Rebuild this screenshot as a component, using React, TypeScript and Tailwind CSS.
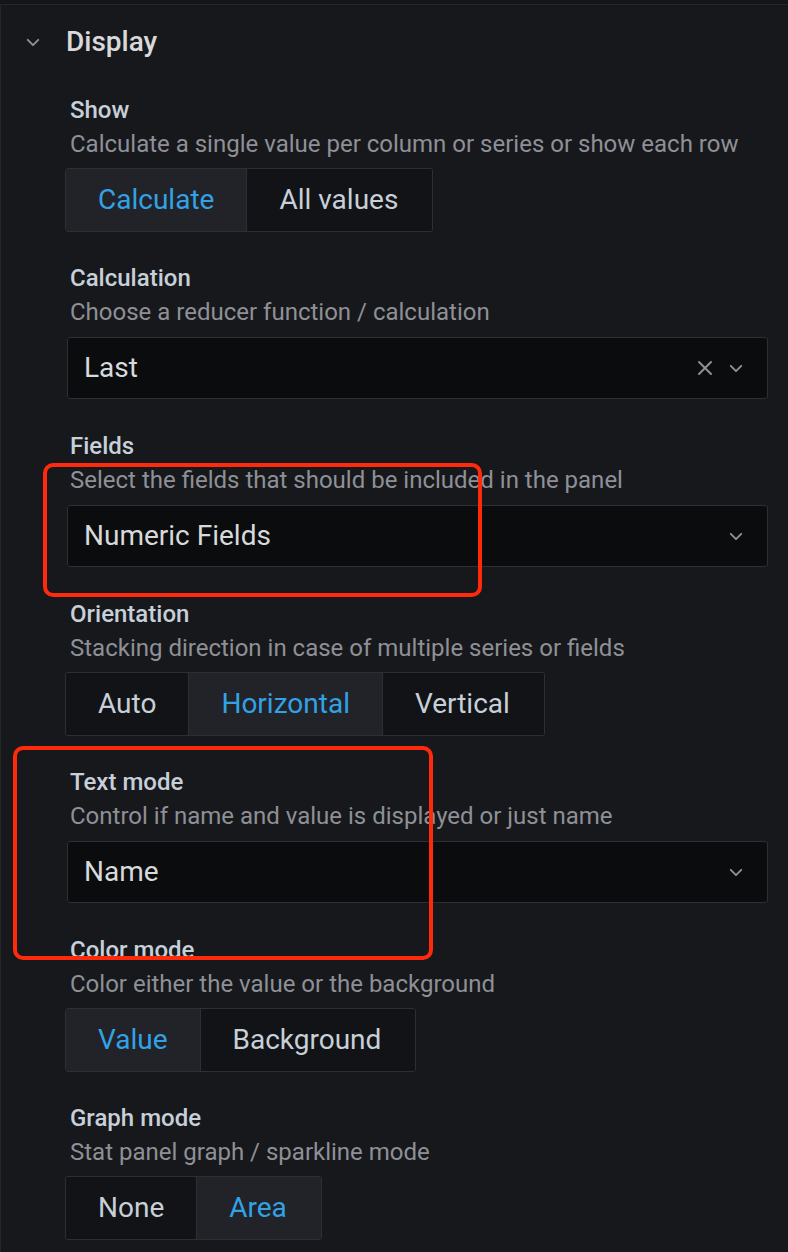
import React from "react";

type Opt = { label: string; active?: boolean };

function ChevronDown({ className }: { className?: string }) {
  return (
    <svg viewBox="0 0 16 10" className={className} fill="none" stroke="currentColor" strokeWidth="2.2" strokeLinecap="round" strokeLinejoin="round">
      <path d="M2 2 L8 8 L14 2" />
    </svg>
  );
}

function Field({ label, desc, children }: { label: string; desc: string; children: React.ReactNode }) {
  return (
    <div className="flex flex-col mb-[29px]">
      <div className="pl-[5px] h-[34px] leading-[34px] text-[24px] font-medium text-[#c7d0d9]">{label}</div>
      <div className="pl-[5px] h-[34px] leading-[34px] text-[24px] text-[#8e9096]">{desc}</div>
      {children}
    </div>
  );
}

function RadioGroup({ options }: { options: Opt[] }) {
  return (
    <div className="mt-[7px] flex self-start h-[64px] rounded-[3px] border border-[#2c2f34] overflow-hidden">
      {options.map((o, i) => (
        <div
          key={o.label}
          className={`flex items-center px-[32px] last:pr-[34px] text-[28px] ${i > 0 ? "border-l border-[#2c2f34]" : ""} ${
            o.active ? "bg-[#212328] text-[#33a2e5]" : "bg-[#121316] text-[#c7d0d9]"
          }`}
        >
          {o.label}
        </div>
      ))}
    </div>
  );
}

function Select({ value, clearable }: { value: string; clearable?: boolean }) {
  return (
    <div className="mt-[8px] mb-[1px] ml-[2px] flex items-center h-[62px] rounded-[3px] border border-[#2c2f34] bg-[#0b0c0e] pl-[16px] pr-[24px]">
      <span className="flex-1 text-[28px] text-[#d8d9da]">{value}</span>
      {clearable && (
        <svg viewBox="0 0 16 16" className="w-[16px] h-[16px] mr-[16px] text-[#8e9096]" fill="none" stroke="currentColor" strokeWidth="2" strokeLinecap="round">
          <path d="M2 2 L14 14 M14 2 L2 14" />
        </svg>
      )}
      <ChevronDown className="w-[14px] h-[9px] text-[#8e9096]" />
    </div>
  );
}

export default function App() {
  return (
    <div className="relative w-[788px] h-[1252px] overflow-hidden bg-[#141518] pt-[4px]" style={{ fontFamily: "Roboto, 'Liberation Sans', sans-serif" }}>
      <div className="h-full border-t border-l border-[#24262b] bg-[#17181c]">
        {/* Header */}
        <div className="flex items-center h-[74px]">
          <div className="w-[65px] flex justify-center pr-[2px]">
            <ChevronDown className="w-[14px] h-[9px] text-[#8e9096]" />
          </div>
          <span className="text-[28px] font-medium text-[#d8d9da]">Display</span>
        </div>

        <div className="pl-[64px] pr-[20px] pt-[14px] flex flex-col">
          <Field label="Show" desc="Calculate a single value per column or series or show each row">
            <RadioGroup options={[{ label: "Calculate", active: true }, { label: "All values" }]} />
          </Field>
          <Field label="Calculation" desc="Choose a reducer function / calculation">
            <Select value="Last" clearable />
          </Field>
          <Field label="Fields" desc="Select the fields that should be included in the panel">
            <Select value="Numeric Fields" />
          </Field>
          <Field label="Orientation" desc="Stacking direction in case of multiple series or fields">
            <RadioGroup options={[{ label: "Auto" }, { label: "Horizontal", active: true }, { label: "Vertical" }]} />
          </Field>
          <Field label="Text mode" desc="Control if name and value is displayed or just name">
            <Select value="Name" />
          </Field>
          <Field label="Color mode" desc="Color either the value or the background">
            <RadioGroup options={[{ label: "Value", active: true }, { label: "Background" }]} />
          </Field>
          <Field label="Graph mode" desc="Stat panel graph / sparkline mode">
            <RadioGroup options={[{ label: "None" }, { label: "Area", active: true }]} />
          </Field>
        </div>
      </div>

      {/* annotation boxes */}
      <div className="absolute left-[43px] top-[463px] w-[439px] h-[134px] rounded-[10px] border-[4px] border-[#ff2a0c]" />
      <div className="absolute left-[13px] top-[746px] w-[420px] h-[214px] rounded-[10px] border-[4px] border-[#ff2a0c]" />
    </div>
  );
}
